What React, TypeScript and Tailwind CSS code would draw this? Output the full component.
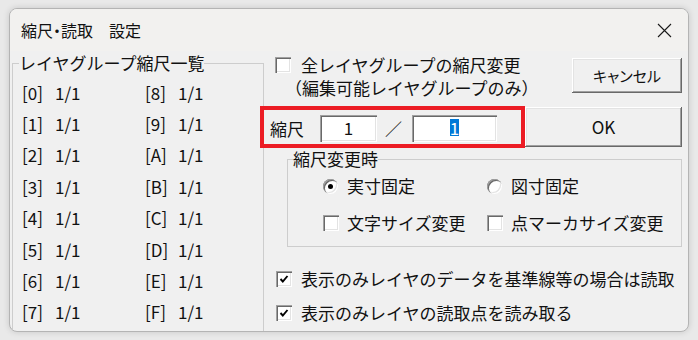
import type { ReactNode } from "react";

const sunken =
  "bg-white shadow-[inset_1px_1px_0_#a0a0a0,inset_2px_2px_0_#696969,inset_-1px_-1px_0_#ffffff,inset_-2px_-2px_0_#e3e3e3]";
const raised =
  "bg-[#f0f0f0] shadow-[inset_-1px_-1px_0_#696969,inset_1px_1px_0_#ffffff,inset_-2px_-2px_0_#a0a0a0,inset_2px_2px_0_#e3e3e3]";

function Check({ checked = false }: { checked?: boolean }) {
  return (
    <span className={`${sunken} w-[16px] h-[16px] shrink-0 flex items-center justify-center`}>
      {checked && (
        <svg width="16" height="16" viewBox="0 0 16 16">
          <path d="M4.5 8 L6.8 10.5 L11.5 5" fill="none" stroke="#000" strokeWidth="1.9" />
        </svg>
      )}
    </span>
  );
}

function Radio({ checked = false }: { checked?: boolean }) {
  return (
    <span className="w-[15px] h-[15px] shrink-0 rounded-full bg-white flex items-center justify-center shadow-[inset_1px_1px_0_#a0a0a0,inset_2px_2px_0_#696969,inset_-1px_-1px_0_#ffffff,inset_-2px_-2px_0_#e3e3e3]">
      {checked && <span className="w-[5px] h-[5px] rounded-full bg-black" />}
    </span>
  );
}

function Btn({ className, children }: { className: string; children: ReactNode }) {
  return <div className={`${raised} flex items-center justify-center shrink-0 ${className}`}>{children}</div>;
}

const groups = ["0", "1", "2", "3", "4", "5", "6", "7", "8", "9", "A", "B", "C", "D", "E", "F"];

export default function App() {
  return (
    <div className="w-[698px] h-[340px] bg-[#e9e9e9] pt-[8px] pl-[9px] font-['Noto_Sans_CJK_JP','Noto_Sans',sans-serif] text-[#111]">
      <div className="w-[680px] h-[324px] rounded-[8px] border border-[#b4b4b4] bg-[#f0f0f0] overflow-hidden flex flex-col shadow-[0_0_6px_rgba(0,0,0,0.15)]">
        {/* title bar */}
        <div className="h-[42px] shrink-0 bg-[#f2f1ef] flex items-center justify-between pl-[11px] pr-[16px] text-[16px] leading-[20px]">
          <span className="[font-feature-settings:'palt']">縮尺・読取　設定</span>
          <svg width="15" height="15" viewBox="0 0 15 15">
            <path d="M1 1 L14 14 M14 1 L1 14" stroke="#1a1a1a" strokeWidth="1.1" />
          </svg>
        </div>

        <div className="flex-1 flex text-[17px] leading-[20px]">
          {/* layer group list */}
          <fieldset className="ml-[2px] mt-[2px] w-[252px] min-w-0 h-[300px] shrink-0 border border-[#cdcdcd] pl-[6px]">
            <legend className="leading-[20px]">レイヤグループ縮尺一覧</legend>
            <div className="mt-[4px] ml-[3px] grid grid-flow-col grid-rows-[repeat(8,31.4px)] grid-cols-[123px_90px]">
              {groups.map((g) => (
                <div key={g} className="flex items-center">
                  <span className="w-[33px]">[{g}]</span>
                  <span>1/1</span>
                </div>
              ))}
            </div>
          </fieldset>

          {/* settings */}
          <div className="flex-1 min-w-0 flex flex-col">
            <div className="mt-[4px] h-[43px] flex">
              <div className="flex-1 flex flex-col">
                <div className="h-[20px] flex items-center pl-[11px]">
                  <Check />
                  <span className="ml-[10px]">全レイヤグループの縮尺変更</span>
                </div>
                <div className="h-[20px] mt-[3px] pl-[21px] flex items-center">（編集可能レイヤグループのみ）</div>
              </div>
              <Btn className="mt-[3px] mr-[6px] w-[110px] h-[35px] text-[15px] [font-feature-settings:'palt']">キャンセル</Btn>
            </div>

            <div className="mt-[8px] flex h-[42px]">
              <div className="-ml-[4px] w-[265px] h-[42px] shrink-0 border-4 border-[#ec1c24] flex items-start pt-[5px] pl-[6px]">
                <span className="leading-[27px]">縮尺</span>
                <div className={`${sunken} ml-[16px] w-[57px] h-[27px] flex items-center justify-center pb-[2px]`}>1</div>
                <span className="ml-[8px] leading-[27px]">／</span>
                <div className={`${sunken} ml-[10px] w-[85px] h-[27px] flex items-center justify-center pb-[2px]`}>
                  <span className="bg-[#0078d7] text-white leading-[17px]">1</span>
                </div>
              </div>
              <Btn className="mt-[1px] w-[157px] h-[40px]">OK</Btn>
            </div>

            <fieldset className="mt-[2px] ml-[23px] mr-[6px] min-w-0 h-[97px] border border-[#cdcdcd] pl-[35px] pr-[4px]">
              <legend className="ml-[-30px] leading-[18px]">縮尺変更時</legend>
              <div className="mt-[3px] h-[30px] flex items-center">
                <div className="w-[164px] flex items-center">
                  <Radio checked />
                  <span className="ml-[9px]">実寸固定</span>
                </div>
                <div className="flex items-center">
                  <Radio />
                  <span className="ml-[9px]">図寸固定</span>
                </div>
              </div>
              <div className="mt-[7px] h-[30px] flex items-center">
                <div className="w-[164px] flex items-center">
                  <Check />
                  <span className="ml-[8px]">文字サイズ変更</span>
                </div>
                <div className="flex items-center">
                  <Check />
                  <span className="ml-[8px] whitespace-nowrap">点マーカサイズ変更</span>
                </div>
              </div>
            </fieldset>

            <div className="mt-[22px] h-[20px] flex items-center pl-[12px]">
              <Check checked />
              <span className="ml-[9px] whitespace-nowrap">表示のみレイヤのデータを基準線等の場合は読取</span>
            </div>
            <div className="mt-[14px] h-[20px] flex items-center pl-[12px]">
              <Check checked />
              <span className="ml-[9px]">表示のみレイヤの読取点を読み取る</span>
            </div>
          </div>
        </div>
      </div>
    </div>
  );
}
